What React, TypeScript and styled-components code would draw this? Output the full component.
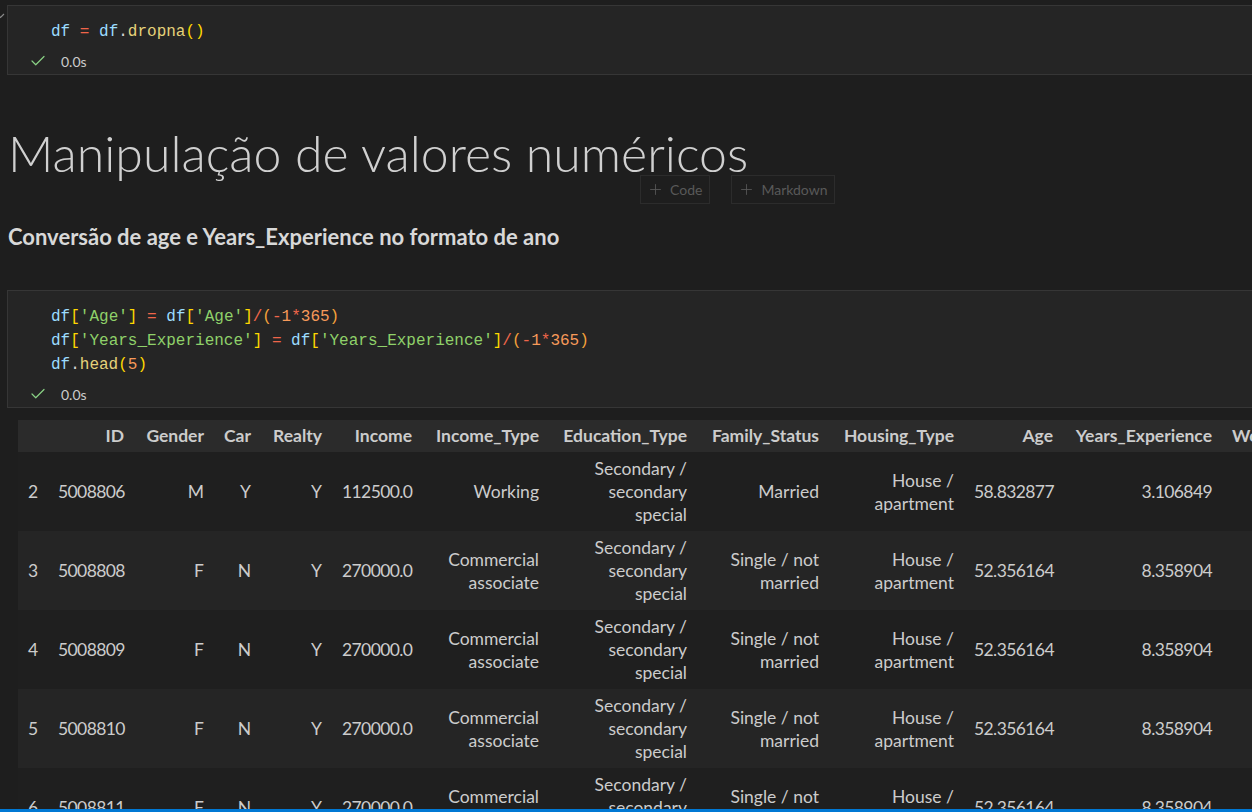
import React from "react";
import styled, { createGlobalStyle } from "styled-components";
import { Check, Plus } from "lucide-react";

const Global = createGlobalStyle`
  html, body {
    margin: 0;
    padding: 0;
    height: 100%;
    overflow: hidden;
    background: #1e1e1e;
  }
  #root { height: 100%; }
`;

const UI = `Lato, "Noto Sans", "Liberation Sans", sans-serif`;
const MONO = `"Liberation Mono", "DejaVu Sans Mono", monospace`;

const Page = styled.div`
  position: relative;
  width: 1420px;
  height: 100%;
  padding: 5px 0 0 7px;
  box-sizing: border-box;
  background: #1e1e1e;
  font-family: ${UI};
  color: #cccccc;
`;

const FoldMark = styled.div`
  position: absolute;
  left: -4px;
  top: 11px;
  width: 9px;
  height: 9px;
  color: #8a8a8a;
  display: flex;
`;

const CodeCell = styled.div<{ $gap?: number }>`
  box-sizing: border-box;
  margin-top: ${(p) => p.$gap ?? 0}px;
  background: #252525;
  border: 1px solid #363636;
  padding: 14px 0 3px 0;
`;

const CodeBlock = styled.pre`
  margin: 0;
  padding-left: 43px;
  font-family: ${MONO};
  font-size: 16px;
  line-height: 24px;
  color: #d4d4d4;
`;

const Tok = styled.span<{ $c: string }>`
  color: ${(p) => p.$c};
`;

const Status = styled.div`
  display: flex;
  align-items: center;
  height: 20px;
  margin-top: 7px;
  padding-left: 21px;
  gap: 14px;
  font-family: ${UI};
  font-size: 14px;
  color: #cccccc;
`;

const CheckIcon = styled.span`
  display: flex;
  color: #89d185;
`;

const Markdown = styled.div`
  position: relative;
  padding: 48px 0 0 1px;
`;

const H1 = styled.h1`
  margin: 0;
  font-family: ${UI};
  font-weight: 300;
  font-size: 50px;
  line-height: 60px;
  color: #d0d0d0;
`;

const H3 = styled.h3`
  margin: 41px 0 0 0;
  font-family: ${UI};
  font-weight: 700;
  font-size: 22px;
  line-height: 26px;
  color: #d8d8d8;
`;

const InsertBar = styled.div`
  position: absolute;
  left: 633px;
  top: 100px;
  display: flex;
  gap: 21px;
`;

const InsertButton = styled.div`
  display: flex;
  align-items: center;
  gap: 6px;
  height: 29px;
  box-sizing: border-box;
  padding: 0 7px 0 6px;
  border: 1px solid #2c2c2c;
  font-family: ${UI};
  font-size: 14px;
  color: #595959;
`;

const Output = styled.div`
  margin: 12px 0 0 11px;
`;

const Table = styled.table<{ $w: number }>`
  width: ${(p) => p.$w}px;
  border-collapse: collapse;
  table-layout: fixed;
  font-family: ${UI};
  font-size: 17.5px;
  color: #cccccc;
`;

const Col = styled.col<{ $w: number }>`
  width: ${(p) => p.$w}px;
`;

const Th = styled.th`
  padding: 4px 10px;
  line-height: 24px;
  text-align: right;
  font-weight: 700;
  white-space: nowrap;
  overflow: hidden;
`;

const HeadRow = styled.tr`
  background: #2b2b2b;
`;

const Row = styled.tr<{ $alt: boolean }>`
  background: ${(p) => (p.$alt ? "#252525" : "#1f1f1f")};
`;

const Td = styled.td<{ $left?: boolean; $num?: boolean }>`
  padding: 5px 10px;
  height: 69px;
  line-height: 23px;
  text-align: ${(p) => (p.$left ? "left" : "right")};
  letter-spacing: ${(p) => (p.$num ? "-0.6px" : "0")};
  vertical-align: middle;
  white-space: nowrap;
  overflow: hidden;
`;

const Line = styled.div``;

const BottomBar = styled.div`
  position: fixed;
  left: 0;
  right: 0;
  bottom: 0;
  height: 3px;
  background: #0078d4;
`;

const C = {
  v: "#9cdcfe",
  op: "#f0654a",
  fn: "#e6d27a",
  br: "#ffd700",
  br2: "#f4a13b",
  str: "#8fd16a",
  num: "#f79a5a",
  pl: "#d4d4d4",
};

const columns: { label: string; w: number; left?: boolean; num?: boolean }[] = [
  { label: "", w: 30, left: true },
  { label: "ID", w: 86, num: true },
  { label: "Gender", w: 80 },
  { label: "Car", w: 47 },
  { label: "Realty", w: 71 },
  { label: "Income", w: 90, num: true },
  { label: "Income_Type", w: 127 },
  { label: "Education_Type", w: 148 },
  { label: "Family_Status", w: 132 },
  { label: "Housing_Type", w: 135 },
  { label: "Age", w: 99, num: true },
  { label: "Years_Experience", w: 159, num: true },
  { label: "Work_Phone", w: 120 },
];

const tableWidth = columns.reduce((s, c) => s + c.w, 0);

type Cell = string | string[];

const edu = ["Secondary /", "secondary", "special"];
const house = ["House /", "apartment"];
const comm = ["Commercial", "associate"];
const single = ["Single / not", "married"];

const rows: Cell[][] = [
  ["2", "5008806", "M", "Y", "Y", "112500.0", "Working", edu, "Married", house, "58.832877", "3.106849", ""],
  ["3", "5008808", "F", "N", "Y", "270000.0", comm, edu, single, house, "52.356164", "8.358904", ""],
  ["4", "5008809", "F", "N", "Y", "270000.0", comm, edu, single, house, "52.356164", "8.358904", ""],
  ["5", "5008810", "F", "N", "Y", "270000.0", comm, edu, single, house, "52.356164", "8.358904", ""],
  ["6", "5008811", "F", "N", "Y", "270000.0", comm, edu, single, house, "52.356164", "8.358904", ""],
];

function StatusLine() {
  return (
    <Status>
      <CheckIcon>
        <Check size={18} strokeWidth={1.6} />
      </CheckIcon>
      <span>0.0s</span>
    </Status>
  );
}

function Str({ s }: { s: string }) {
  return <Tok $c={C.str}>'{s}'</Tok>;
}

function Divide() {
  return (
    <>
      <Tok $c={C.op}>/</Tok>
      <Tok $c={C.br2}>(</Tok>
      <Tok $c={C.op}>-</Tok>
      <Tok $c={C.num}>1</Tok>
      <Tok $c={C.op}>*</Tok>
      <Tok $c={C.num}>365</Tok>
      <Tok $c={C.br2}>)</Tok>
    </>
  );
}

function Index({ s }: { s: string }) {
  return (
    <>
      <Tok $c={C.v}>df</Tok>
      <Tok $c={C.br}>[</Tok>
      <Str s={s} />
      <Tok $c={C.br}>]</Tok>
    </>
  );
}

export default function App() {
  return (
    <>
      <Global />
      <Page>
        <FoldMark>
          <svg width="9" height="9" viewBox="0 0 9 9">
            <path d="M1 3 L4.5 6.5 L8 3" fill="none" stroke="currentColor" strokeWidth="1.2" />
          </svg>
        </FoldMark>

        <CodeCell>
          <CodeBlock>
            <Tok $c={C.v}>df</Tok> <Tok $c={C.op}>=</Tok> <Tok $c={C.v}>df</Tok>
            <Tok $c={C.pl}>.</Tok>
            <Tok $c={C.fn}>dropna</Tok>
            <Tok $c={C.br}>()</Tok>
          </CodeBlock>
          <StatusLine />
        </CodeCell>

        <Markdown>
          <H1>Manipulação de valores numéricos</H1>
          <InsertBar>
            <InsertButton>
              <Plus size={17} strokeWidth={1.2} />
              Code
            </InsertButton>
            <InsertButton>
              <Plus size={17} strokeWidth={1.2} />
              Markdown
            </InsertButton>
          </InsertBar>
          <H3>Conversão de age e Years_Experience no formato de ano</H3>
        </Markdown>

        <CodeCell $gap={40}>
          <CodeBlock>
            <Index s="Age" /> <Tok $c={C.op}>=</Tok> <Index s="Age" />
            <Divide />
            {"\n"}
            <Index s="Years_Experience" /> <Tok $c={C.op}>=</Tok>{" "}
            <Index s="Years_Experience" />
            <Divide />
            {"\n"}
            <Tok $c={C.v}>df</Tok>
            <Tok $c={C.pl}>.</Tok>
            <Tok $c={C.fn}>head</Tok>
            <Tok $c={C.br}>(</Tok>
            <Tok $c={C.num}>5</Tok>
            <Tok $c={C.br}>)</Tok>
          </CodeBlock>
          <StatusLine />
        </CodeCell>

        <Output>
          <Table $w={tableWidth}>
            <colgroup>
              {columns.map((c, i) => (
                <Col key={i} $w={c.w} />
              ))}
            </colgroup>
            <thead>
              <HeadRow>
                {columns.map((c, i) => (
                  <Th key={i}>{c.label}</Th>
                ))}
              </HeadRow>
            </thead>
            <tbody>
              {rows.map((r, ri) => (
                <Row key={ri} $alt={ri % 2 === 1}>
                  {r.map((cell, ci) => (
                    <Td key={ci} $left={columns[ci].left} $num={columns[ci].num}>
                      {Array.isArray(cell)
                        ? cell.map((l, li) => <Line key={li}>{l}</Line>)
                        : cell}
                    </Td>
                  ))}
                </Row>
              ))}
            </tbody>
          </Table>
        </Output>
        <BottomBar />
      </Page>
    </>
  );
}
